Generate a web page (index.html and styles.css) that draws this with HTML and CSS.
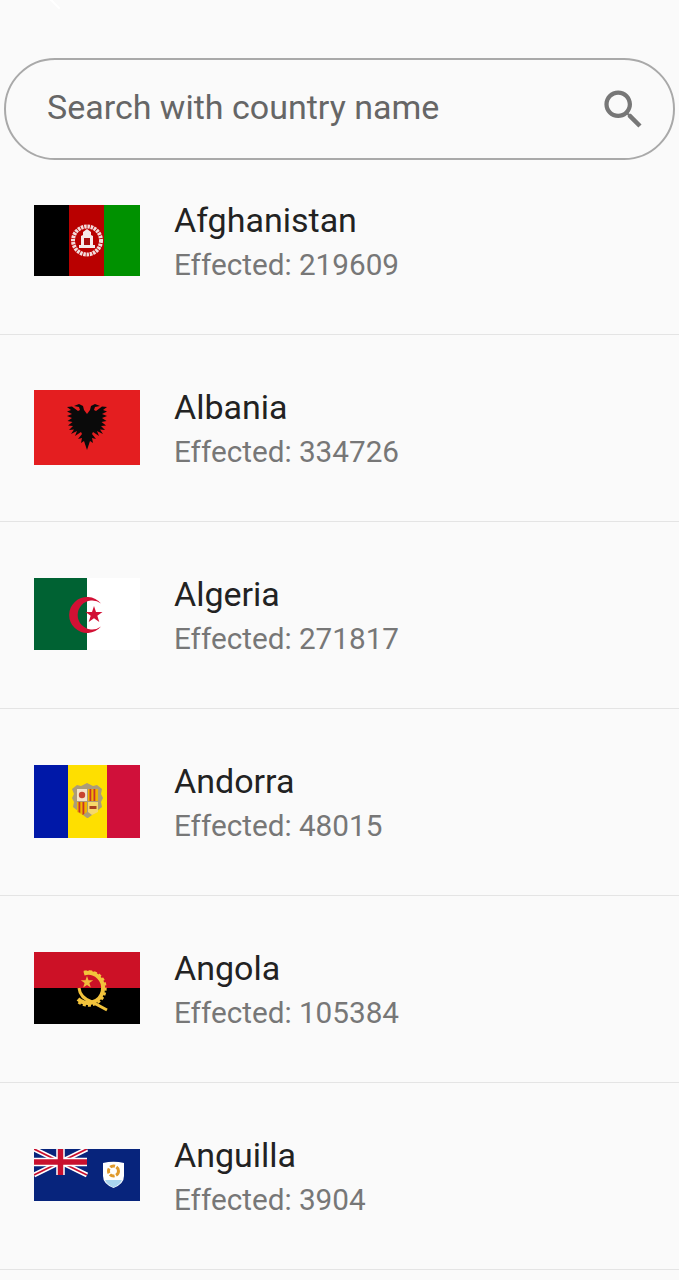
FILE: index.html
```html
<!DOCTYPE html>
<html lang="en">
<head>
    <meta charset="UTF-8">
    <meta name="viewport" content="width=device-width, initial-scale=1.0">
    <title>Countries</title>
    <link rel="stylesheet" href="styles.css">
</head>
<body>
    <div class="status-bar"><span class="status-mark"></span></div>

    <div class="search-box">
        <input type="text" class="search-input" placeholder="Search with country name">
        <svg class="search-icon" viewBox="0 0 24 24"><path d="M15.5 14h-.79l-.28-.27C15.41 12.59 16 11.11 16 9.5 16 5.91 13.09 3 9.5 3S3 5.91 3 9.5 5.91 16 9.5 16c1.61 0 3.09-.59 4.23-1.57l.27.28v.79l5 4.99L20.49 19l-4.99-5zm-6 0C7.01 14 5 11.99 5 9.5S7.01 5 9.5 5 14 7.01 14 9.5 11.99 14 9.5 14z"/></svg>
    </div>

    <div class="country-list">
        <div class="country-row">
            <div class="flag-box">
                <svg class="flag" width="106" height="71" viewBox="0 0 106 71">
                    <rect width="36" height="71" fill="#000"/>
                    <rect x="35" width="36" height="71" fill="#b90000"/>
                    <rect x="70" width="36" height="71" fill="#009100"/>
                    <circle cx="53" cy="35.5" r="14" fill="none" stroke="#f3dcdc" stroke-width="4" stroke-dasharray="2.5 .8"/>
                    <path d="M45 43h16v-3h-2v-9l-2-1v-3l-4-3-4 3v3l-2 1v9h-2z" fill="#f6eaea"/>
                    <path d="M50 40v-7h6v7z" fill="#a80f0f"/>
                </svg>
            </div>
            <div class="country-info">
                <div class="country-name">Afghanistan</div>
                <div class="country-count">Effected: 219609</div>
            </div>
        </div>

        <div class="country-row">
            <div class="flag-box">
                <svg class="flag" width="106" height="75" viewBox="0 0 106 75">
                    <rect width="106" height="75" fill="#e41e20"/>
                    <path id="eagle-half" d="M53 24L50 20 49 16 45 14 40 16 45 17 46 20 44 21 38 16.500 33 17 37 20 33 21.500 38 24 33 26 38 28 33.500 31 38.500 32 34 35.500 39 36 35 40 40 39.500 37 44 43 41 41 46 47 42 48 44 44 49 48 48 47 53 50 51 53 60z" fill="#0a0a0a"/>
                    <use href="#eagle-half" transform="translate(106) scale(-1 1)"/>
                </svg>
            </div>
            <div class="country-info">
                <div class="country-name">Albania</div>
                <div class="country-count">Effected: 334726</div>
            </div>
        </div>

        <div class="country-row">
            <div class="flag-box">
                <svg class="flag" width="106" height="72" viewBox="0 0 106 72">
                    <rect width="106" height="72" fill="#fff"/>
                    <rect width="53" height="72" fill="#006233"/>
                    <path d="M67 25.500A18 18 0 1 0 67 48.500 14.500 14.500 0 1 1 67 25.500z" fill="#d21034"/>
                    <path d="M60 28l2 6 6.500 0-5.200 3.800 2 6.200-5.300-3.800-5.300 3.800 2-6.200-5.200-3.800 6.500 0z" fill="#d21034"/>
                </svg>
            </div>
            <div class="country-info">
                <div class="country-name">Algeria</div>
                <div class="country-count">Effected: 271817</div>
            </div>
        </div>

        <div class="country-row">
            <div class="flag-box">
                <svg class="flag" width="106" height="73" viewBox="0 0 106 73">
                    <rect width="34" height="73" fill="#0018a8"/>
                    <rect x="34" width="39" height="73" fill="#fedf00"/>
                    <rect x="73" width="33" height="73" fill="#d0103a"/>
                    <path d="M38 24l5-4 4 1 6-3 6 3 4-1 5 4-1 5 2 4-2 4 1 5-5 4-5 4-4 3-1 0-4-3-5-4-5-4 1-5-2-4 2-4z" fill="#ab9c78"/>
                    <rect x="43" y="24" width="10" height="12" fill="#f4e3c8"/>
                    <circle cx="48" cy="30" r="3.200" fill="#c8452e"/>
                    <path d="M54 24h10v12H54z" fill="#f0b400"/>
                    <path d="M55.500 24h1.800v12h-1.800zM59.500 24h1.800v12h-1.800z" fill="#c8312a"/>
                    <path d="M43 37h10v10l-4 3-6-3z" fill="#f0b400"/>
                    <path d="M44.500 37h1.800v11l-1.800-1zM48.500 37h1.800v12l-1.800 1z" fill="#c8312a"/>
                    <path d="M54 37h10v10l-6 3-4-3z" fill="#f6d96a"/>
                    <path d="M55.500 41h7v3h-7z" fill="#a9421f"/>
                </svg>
            </div>
            <div class="country-info">
                <div class="country-name">Andorra</div>
                <div class="country-count">Effected: 48015</div>
            </div>
        </div>

        <div class="country-row">
            <div class="flag-box">
                <svg class="flag" width="106" height="72" viewBox="0 0 106 72">
                    <rect width="106" height="36" fill="#cc1126"/>
                    <rect y="36" width="106" height="36" fill="#000"/>
                    <path d="M50 21.500A15 15 0 1 1 44 47" fill="none" stroke="#f2c33c" stroke-width="4"/>
                    <path d="M50 20A17 17 0 1 1 43 49" fill="none" stroke="#f2c33c" stroke-width="2.500" stroke-dasharray="3 2"/>
                    <path d="M45 36Q46 46 58 50L73 58" fill="none" stroke="#f2c33c" stroke-width="3"/>
                    <path d="M53 24l1.500 4.300 4.700 0-3.800 2.800 1.400 4.500-3.800-2.700-3.800 2.700 1.400-4.500-3.800-2.800 4.700 0z" fill="#f2b93c"/>
                </svg>
            </div>
            <div class="country-info">
                <div class="country-name">Angola</div>
                <div class="country-count">Effected: 105384</div>
            </div>
        </div>

        <div class="country-row">
            <div class="flag-box">
                <svg class="flag" width="106" height="52" viewBox="0 0 106 52">
                    <rect width="106" height="52" fill="#07247c"/>
                    <path d="M0 0L53 26M53 0L0 26" stroke="#fff" stroke-width="5"/>
                    <path d="M0 0L53 26M53 0L0 26" stroke="#c8102e" stroke-width="1.800"/>
                    <path d="M26.500 0v26M0 13h53" stroke="#fff" stroke-width="8.500"/>
                    <path d="M26.500 0v26M0 13h53" stroke="#c8102e" stroke-width="5.500"/>
                    <path d="M69 14q10.500-2.500 21 0v13q0 8-10.500 12Q69 35 69 27z" fill="#fff"/>
                    <path d="M71 31h17q-2 5-8.500 7.500Q73 36 71 31z" fill="#a9d5ee"/>
                    <circle cx="79.500" cy="22" r="5" fill="none" stroke="#e09a2c" stroke-width="3" stroke-dasharray="5 1.500"/>
                </svg>
            </div>
            <div class="country-info">
                <div class="country-name">Anguilla</div>
                <div class="country-count">Effected: 3904</div>
            </div>
        </div>
    </div>
</body>
</html>
```

FILE: styles.css
```css
html, body {
    height: 100%;
}
body {
    font-family: Roboto, "Liberation Sans", sans-serif;
    background-color: #fafafa;
    margin: 0;
    overflow: hidden;
}
.status-bar {
    height: 58px;
    position: relative;
}
.status-mark {
    position: absolute;
    left: 46px;
    top: 2px;
    width: 16px;
    height: 2px;
    background-color: #fff;
    transform: rotate(45deg);
}
.search-box {
    display: flex;
    align-items: center;
    height: 102px;
    margin: 0 4px;
    padding: 0 24px 0 41px;
    border: 2px solid #a9a9a9;
    border-radius: 51px;
    box-sizing: border-box;
}
.search-input {
    flex: 1;
    min-width: 0;
    margin-bottom: 4px;
    border: none;
    outline: none;
    padding: 0;
    background: transparent;
    font-family: inherit;
    font-size: 34px;
    color: #666;
}
.search-input::placeholder {
    color: #666;
    opacity: 1;
}
.search-icon {
    width: 51px;
    height: 51px;
    fill: #777;
}
.country-row {
    display: flex;
    align-items: center;
    height: 187px;
    padding-left: 34px;
    padding-bottom: 2px;
    border-bottom: 1px solid #e4e4e4;
    box-sizing: border-box;
}
.country-row:first-child {
    height: 175px;
    padding-bottom: 14px;
}
.flag-box {
    display: flex;
    align-items: center;
    width: 106px;
    margin-right: 35px;
}
.flag {
    display: block;
    filter: blur(0.4px);
}
.country-info {
    padding-top: 5px;
}
.country-name {
    font-size: 34px;
    line-height: 44px;
    color: #222;
    margin-left: -1px;
}
.country-count {
    font-size: 29.7px;
    line-height: 44px;
    margin-top: 1px;
    color: #777;
    margin-left: -1px;
}
```
